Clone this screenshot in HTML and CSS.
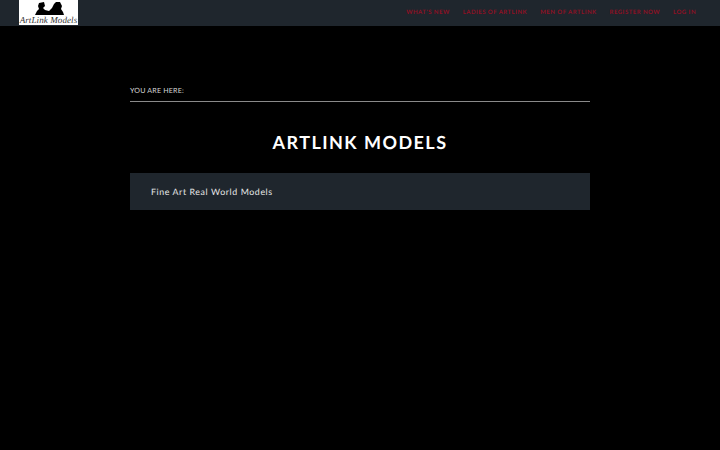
FILE: index.html
```
<!DOCTYPE html>
<html lang="en">
<head>
<meta charset="utf-8">
<title>ArtLink Models</title>
<link rel="stylesheet" href="styles.css">
</head>
<body>
<header class="topbar">
  <a class="logo" href="#">
    <svg class="logo-art" viewBox="0 0 59 15" aria-hidden="true">
      <path d="M16 15 L18 11 L20 9 L19 6 L20 3 L25 2 L26 6 L24 8 L26 10 L30 11 L33 8 L35 4 L37 2 L41 2 L43 6 L42 9 L44 12 L45 15 Z"/>
    </svg>
    <span class="logo-text">ArtLink Models</span>
  </a>
  <nav class="nav">
    <a href="#">WHAT'S NEW</a>
    <a href="#">LADIES OF ARTLINK</a>
    <a href="#">MEN OF ARTLINK</a>
    <a href="#">REGISTER NOW</a>
    <a href="#">LOG IN</a>
  </nav>
</header>
<main class="content">
  <div class="crumb">YOU ARE HERE:</div>
  <h1 class="title">ARTLINK MODELS</h1>
  <section class="panel">Fine Art Real World Models</section>
</main>
</body>
</html>
```
FILE: styles.css
```
* { box-sizing: border-box; }
html, body { margin: 0; padding: 0; }
body { background: #000; color: #fff; font-family: Lato, "Liberation Sans", sans-serif; height: 450px; overflow: hidden; text-rendering: geometricPrecision; }
a { text-decoration: none; color: inherit; }
.topbar { height: 26px; background: #1f262d; display: flex; justify-content: space-between; align-items: flex-start; padding: 0 18px 0 19px; }
.logo { width: 59px; height: 25px; background: #fff; display: flex; flex-direction: column; align-items: center; overflow: hidden; }
.logo-art { width: 59px; height: 15px; flex: none; fill: #000; }
.logo-text { font-family: "Liberation Serif", serif; font-style: italic; font-size: 9px; line-height: 10px; color: #333; letter-spacing: 0.1px; white-space: nowrap; }
.nav { display: flex; gap: 13px; font-size: 6px; font-weight: 700; letter-spacing: 0.48px; line-height: 25px; color: #8f1024; padding-right: 6px; }
.content { width: 460px; margin: 0 auto; padding-top: 59px; }
.crumb { font-size: 7.1px; line-height: 12px; color: #d8d8d8; letter-spacing: 0.18px; padding-bottom: 4px; border-bottom: 1px solid #8a8a8a; }
.title { margin: 28px 0 0; font-size: 18px; line-height: 24px; font-weight: 700; letter-spacing: 1.45px; text-align: center; color: #fff; }
.panel { margin-top: 19px; height: 37px; background: #1f262d; padding-left: 21px; font-size: 8.8px; line-height: 37px; letter-spacing: 0.6px; color: #e8e8e8; }
```
